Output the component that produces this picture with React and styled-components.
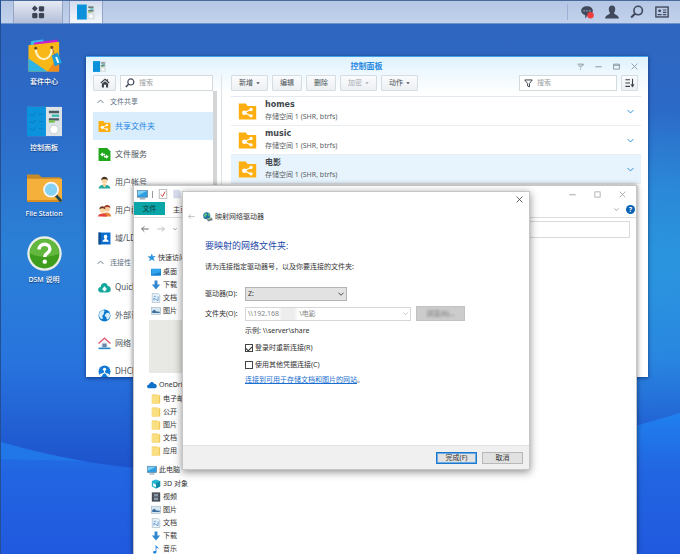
import React, { useState } from "react";
// STYLE
import styled, { createGlobalStyle } from "styled-components";

const sideGroups = [
  {
    title: "文件共享",
    items: [
      { name: "共享文件夹", icon: "share" },
      { name: "文件服务", icon: "service" },
      { name: "用户帐号", icon: "user" },
      { name: "用户群组", icon: "group" },
      { name: "域/LDAP", icon: "ldap" },
    ],
  },
  {
    title: "连接性",
    items: [
      { name: "QuickConnect", icon: "quick" },
      { name: "外部访问", icon: "globe" },
      { name: "网络", icon: "network" },
      { name: "DHCP Server", icon: "dhcp" },
    ],
  },
];

const folders = ["homes", "music", "电影"];

const tools = [
  { name: "新增", menu: true },
  { name: "编辑" },
  { name: "删除" },
  { name: "加密", menu: true, disabled: true },
  { name: "动作", menu: true },
];

const quickItems = [
  { name: "桌面", icon: "desktop" },
  { name: "下载", icon: "download" },
  { name: "文档", icon: "document" },
  { name: "图片", icon: "picture" },
];

const driveItems = ["电子邮件", "公开", "图片", "文档", "应用"];

const pcItems = [
  { name: "3D 对象", icon: "cube" },
  { name: "视频", icon: "video" },
  { name: "图片", icon: "picture" },
  { name: "文档", icon: "document" },
  { name: "下载", icon: "download" },
  { name: "音乐", icon: "music" },
];

// every drawing sits on a 24 x 24 grid
const drawings = {
  apps: (
    <g fill="#3c4354">
      <path d="M6.500 1l5 5-5 5-5-5z" />
      <rect x="13.500" y="2" width="9" height="9" rx="2" />
      <rect x="2" y="13.500" width="9" height="9" rx="2" />
      <rect x="13.500" y="13.500" width="9" height="9" rx="2" />
    </g>
  ),
  panel: (
    <g>
      <rect x="0" y="2" width="24" height="20" fill="#dce3e6" />
      <rect x="0" y="2" width="13" height="20" fill="#0a93dc" />
      <path d="M2 7l2 1 2-2M2 12l2 1 2-2M2 17l2 1 2-2M8 7h3M8 12h3M8 17h3" stroke="#0b7fc4" fill="none" strokeWidth=".7" />
      <path d="M15 5.500h7M15 10.500h7" stroke="#4a5a60" strokeWidth="1.600" />
      <path d="M17 8h5" stroke="#39b6b0" strokeWidth="1.600" />
      <path d="M15 12h4" stroke="#74c04a" strokeWidth="1.600" />
      <circle cx="18.500" cy="17.500" r="2.900" fill="#fff" stroke="#c4cdd0" strokeWidth=".6" />
    </g>
  ),
  package: (
    <g>
      <path d="M3 2l8-1 2 5H2z" fill="#39bdea" />
      <path d="M5 3l16-2v6H4z" fill="#c81fd0" />
      <path d="M1 5l9-1 12-1.500V23H1z" fill="#f8b818" />
      <path d="M1 14l13 9H1z" fill="#2fb4e6" />
      <path d="M22 12v11h-8z" fill="#f08c1c" />
      <path d="M6 7c0 10 11 10 11 0" fill="none" stroke="#fff3d0" strokeWidth="1.400" />
      <circle cx="6" cy="7" r="1" fill="#6b4a10" />
      <circle cx="17" cy="6.500" r="1" fill="#6b4a10" />
      <path d="M17 12l4-2 3 7-5 2.500z" fill="#1d9fdb" />
      <path d="M20 13l1.500 4" stroke="#fff" strokeWidth="1.300" />
      <path d="M17 6l2 6" stroke="#855" strokeWidth=".5" />
    </g>
  ),
  files: (
    <g>
      <path d="M0 3h8l2 2h13v4H0z" fill="#c88a28" />
      <path d="M0 6h24v16H0z" fill="#f5b03c" />
      <path d="M0 20.500h24V22H0z" fill="#d98e20" />
      <path d="M19.500 17l4 4.500" stroke="#23484e" strokeWidth="2" />
      <circle cx="16.500" cy="13.500" r="4.800" fill="#86d2f2" stroke="#f4f6f6" strokeWidth="1.200" />
    </g>
  ),
  help: (
    <g>
      <circle cx="12" cy="12" r="11.800" fill="#e9efe6" />
      <circle cx="12" cy="12" r="10.200" fill="#3f9d1d" />
      <path d="M2 12a10 10 0 0 1 20 0c-6 3-14 3-20 0z" fill="#62b83c" />
      <path d="M8.300 9.300c0-5 7.600-4.600 7.400-.2-.1 2.700-3.500 2.600-3.500 5.300" fill="none" stroke="#fff" strokeWidth="2.300" />
      <circle cx="12.200" cy="17.600" r="1.500" fill="#fff" />
    </g>
  ),
  chat: (
    <g>
      <path d="M12 2c6 0 10 3.500 10 8s-4 8-9 8l-4 5v-5.500c-4-1-7-4-7-7.500 0-4.500 4-8 10-8z" fill="#414a5c" />
      <path d="M6 10h2m3 0h2m3 0h2" stroke="#b9c8e0" strokeWidth="2" />
      <circle cx="18" cy="17.500" r="5.500" fill="#f03c3c" />
    </g>
  ),
  person: (
    <path d="M12 1c4 0 6 3 5.500 7-.3 3-1.500 4-2 5.500 0 3 7.500 2.500 8.500 9.500H0c1-7 8.500-6.500 8.500-9.500-.5-1.500-1.700-2.500-2-5.500C6 4 8 1 12 1z" fill="#414a5c" />
  ),
  search: (
    <g fill="none" stroke="#414a5c">
      <circle cx="14" cy="9.500" r="7.300" strokeWidth="2.800" />
      <path d="M8.500 15L2 21.500" strokeWidth="3.800" />
    </g>
  ),
  widget: (
    <g fill="none" stroke="#414a5c">
      <rect x="1.500" y="3.500" width="21" height="17" strokeWidth="2.400" />
      <circle cx="8" cy="10" r="1.300" strokeWidth="2.400" />
      <path d="M4.500 16.500h7M13.500 8.500h6M13.500 12.500h6M13.500 16.500h6" strokeWidth="2" />
    </g>
  ),
  home: (
    <g fill="#3c4249">
      <path d="M12 1L1 11l2 2 9-8 9 8 2-2-4-3.700V3h-3v2z" />
      <path d="M12 7.500l7.500 6.500v8.500h-5V16h-5v6.500h-5V14z" />
    </g>
  ),
  filter: <path d="M2 2.500h20L14.500 12v9l-5-2.500V12z" fill="none" stroke="#3c4249" strokeWidth="2.600" />,
  sort: (
    <g fill="none" stroke="#3c4249" strokeWidth="2.600">
      <path d="M1 4h11M1 12h11M1 20h11M18 2v18" />
      <path d="M14 15.500h8L18 22z" fill="#3c4249" strokeWidth="1" />
    </g>
  ),
  share: (
    <g>
      <path d="M1 2h9l2 3h11v17H1z" fill="#fdae10" />
      <path d="M8 13.500l8-4M8 13.500l8 4" stroke="#fff" strokeWidth="1.500" />
      <circle cx="8" cy="13.500" r="2.900" fill="#fff" />
      <circle cx="16.500" cy="9.500" r="2.100" fill="#fff" />
      <circle cx="16.500" cy="17.500" r="2.100" fill="#fff" />
    </g>
  ),
  service: (
    <g>
      <path d="M1 0h16l6 6v18H1z" fill="#20a81c" />
      <path d="M4 12l5-4v2.500h4v3H9V16zM20 16l-5-4v2.500h-4v3h4V20z" fill="#fff" />
    </g>
  ),
  user: (
    <g>
      <path d="M1 23c1-6 6-7 11-7s10 1 11 7z" fill="#26aaa0" />
      <path d="M9 14h6v4l-3 3-3-3z" fill="#f7cf9a" />
      <circle cx="12" cy="8.500" r="5.500" fill="#fbd7a4" />
      <path d="M6 8c-1-9 13-9 12 0-2-2.500-10-2.500-12 0z" fill="#4a3426" />
    </g>
  ),
  group: (
    <g>
      <path d="M8 20c1-6 15-6 16 1v2H8z" fill="#e58a3c" />
      <circle cx="17" cy="9" r="5" fill="#f8cb9c" />
      <path d="M11 8c0-8 12-8 12 0-3-3-8-3-12 0z" fill="#a33c20" />
      <path d="M0 23c1-7 16-7 17 0z" fill="#e2413c" />
      <circle cx="8" cy="11" r="5" fill="#fbd7a4" />
      <path d="M2.500 10C2 2 14 2 13.500 10c-3-3-8-3-11 0z" fill="#6e3420" />
    </g>
  ),
  ldap: (
    <g>
      <rect x="1" y="1" width="22" height="22" fill="#0a6ed0" />
      <rect x="1" y="1" width="4" height="22" fill="#134a86" />
      <path d="M14 5c4 0 4 5 1.500 7.500 0 1.500 4 1.500 4.500 5.500H8c.5-4 4.500-4 4.500-5.500C10 10 10 5 14 5z" fill="#fff" />
    </g>
  ),
  quick: (
    <g>
      <path d="M6 21C-2 21-1 11 5 11 5 2 17 1 18 9c7 0 8 12 0 12z" fill="#13a89b" />
      <path d="M12 9.500l5 6h-3V19h-4v-3.500H7z" fill="#fff" />
    </g>
  ),
  globe: (
    <g>
      <circle cx="12" cy="12" r="11" fill="#0b78cf" />
      <path d="M4 5c4-4 8-3 8-1s-2 2-1 4-3 3-3 5 2 3 0 6c-4-1-6-5-6.500-8zM14 9c2-3 6-3 8 0 1 4-1 9-5 11-2-3-1-5-3-6s-2-3 0-5z" fill="#d8eefb" />
    </g>
  ),
  network: (
    <g>
      <path d="M5 10v9h14v-9l-7-6z" fill="#eef3f6" />
      <path d="M1 12L12 2l11 10" fill="none" stroke="#e0566c" strokeWidth="2.600" />
      <path d="M8 19v-7h8v7z" fill="#6c88a8" />
      <path d="M1 21h22" stroke="#2b86c9" strokeWidth="3" />
    </g>
  ),
  dhcp: (
    <g>
      <circle cx="12" cy="12" r="11" fill="#1279d4" />
      <circle cx="12" cy="8" r="3" fill="#fff" />
      <path d="M12 10v5M12 14l-6 4M12 14l6 4" stroke="#fff" strokeWidth="2" />
      <circle cx="6" cy="18" r="2.500" fill="#fff" />
      <circle cx="18" cy="18" r="2.500" fill="#fff" />
    </g>
  ),
  star: <path d="M13 1l2.600 7.600 7.900-.4-6.200 5.300 3.200 8.500-7.500-4.500L5.500 22l2.200-8L1 9.500l8.500-.6z" fill="#2d96e0" />,
  desktop: (
    <g>
      <rect x="0" y="4" width="24" height="17" rx="1" fill="#1a82d2" />
      <path d="M1 5h22v7L1 18z" fill="#32a4ec" />
    </g>
  ),
  download: <path d="M8.500 1h7v10H22L12 22.500 2 11h6.500z" fill="#3287cd" />,
  document: (
    <g>
      <path d="M3 1h14l4 4v18H3z" fill="#eaf2f9" stroke="#8ba0b3" strokeWidth="1.200" />
      <path d="M7 8h5M7 12l10 7M17 8v10M7 18v-6" stroke="#3d86c6" strokeWidth="1.800" fill="none" />
    </g>
  ),
  picture: (
    <g>
      <rect x="1" y="4" width="22" height="16" fill="#d6e6f2" stroke="#8da3b4" strokeWidth="1.200" />
      <path d="M3 17v-5l5-3 5 4 8 1v3z" fill="#3b6f9e" />
    </g>
  ),
  cloud: <path d="M6 20C-2 20-1 11 5 11 7 3 15 3 17 9c7-1 9 10 2 11z" fill="#0f6fc9" />,
  folder: (
    <g>
      <path d="M2 1h14v2h6v20H2z" fill="#efc856" />
      <path d="M2 3h17v20H2z" fill="#fadf82" />
    </g>
  ),
  pc: (
    <g>
      <rect x="1" y="3" width="22" height="15" fill="#2f9fe4" stroke="#5c7890" strokeWidth="1.400" />
      <path d="M2 4h20L2 14z" fill="#7fd0f7" />
      <path d="M6 21.500h12" stroke="#73899b" strokeWidth="2.200" />
    </g>
  ),
  cube: (
    <g>
      <path d="M12 1l10 4v13l-10 5-10-5V5z" fill="#27b5cf" />
      <path d="M12 10l10-5v13l-10 5z" fill="#0f8aa8" />
      <path d="M5 10l7 3v7l-7-3z" fill="#e9fbff" />
    </g>
  ),
  video: (
    <g>
      <rect x="2" y="1" width="20" height="22" fill="#3a4048" />
      <path d="M7 4h10v7H7zM7 13h10v7H7z" fill="#8a99a8" />
      <path d="M5 2v20M19 2v20" stroke="#cbd3da" strokeWidth="1" strokeDasharray="2 2" />
    </g>
  ),
  music: <path d="M11 1c1 5 8 5 7 12-1-4-4-4-5-4v10c0 5-8 5-8 1 0-3 3-4 6-3z" fill="#1f83d8" />,
  check: (
    <g>
      <path d="M3 1h18v22H3z" fill="#fff" stroke="#999" strokeWidth="1.600" />
      <path d="M7 13l4 5 6-12" fill="none" stroke="#d44" strokeWidth="2.400" />
    </g>
  ),
  blank: <path d="M3 2h14l4 4v16H3z" fill="#d8ddee" />,
  drive: (
    <g>
      <circle cx="9" cy="9" r="8.500" fill="#1d6fa8" />
      <path d="M3 5c4-4 7-2 7 1s-4 3-3 7c-4 0-6-5-4-8zM12 3c4 0 5 4 4 8-3 0-5-4-4-8z" fill="#5bbd7a" />
      <path d="M8 15l12-2 4 6-12 4z" fill="#707d85" />
      <path d="M11 17l8-2" stroke="#8df08d" strokeWidth="2" />
    </g>
  ),
  left: <path d="M23 12H2m8-8l-8 8 8 8" fill="none" stroke="currentColor" strokeWidth="2.600" />,
  right: <path d="M1 12h21m-8-8l8 8-8 8" fill="none" stroke="currentColor" strokeWidth="2.600" />,
  up: <path d="M2 17L12 7l10 10" fill="none" stroke="currentColor" strokeWidth="3" />,
  down: <path d="M2 7l10 10L22 7" fill="none" stroke="currentColor" strokeWidth="3.400" />,
  caret: <path d="M2 7h20L12 19z" fill="currentColor" />,
  close: <path d="M2 2l20 20M22 2L2 22" stroke="currentColor" strokeWidth="2.600" />,
  mini: <path d="M1 13h22" stroke="currentColor" strokeWidth="3" />,
  box: <rect x="3" y="3" width="18" height="18" fill="none" stroke="currentColor" strokeWidth="2.400" />,
  maxi: <path d="M2 4h20v17H2zM2 8h20" fill="none" stroke="currentColor" strokeWidth="2.800" />,
  ask: <path d="M2 4h20c0 8-10 4-10 12m0 3v4M5 10h7" fill="none" stroke="currentColor" strokeWidth="2.800" />,
};

function Icon({ name, size = 12 }) {
  return (
    <Drawing viewBox="0 0 24 24" width={size} height={size} aria-hidden="true">
      {drawings[name]}
    </Drawing>
  );
}

function ControlPanel() {
  const [page, setPage] = useState("共享文件夹");
  const [folder, setFolder] = useState("电影");

  return (
    <PanelWindow>
      <PanelTitle>
        <Icon name="panel" size={13} />
        <h1>控制面板</h1>
        <PanelControls>
          {["ask", "mini", "maxi", "close"].map((name) => (
            <IconButton key={name} aria-label={name}>
              <Icon name={name} size={7} />
            </IconButton>
          ))}
        </PanelControls>
      </PanelTitle>
      <PanelBody>
        <SideBar>
          <SideTop>
            <ToolButton $wide aria-label="首页">
              <Icon name="home" size={10} />
            </ToolButton>
            <SearchBox>
              <Icon name="search" size={10} />
              <input placeholder="搜索" aria-label="搜索" />
            </SearchBox>
          </SideTop>
          {sideGroups.map((group) => (
            <div key={group.title}>
              <SideHeader>
                <Icon name="up" size={7} />
                {group.title}
              </SideHeader>
              {group.items.map((item) => (
                <SideItem
                  key={item.name}
                  href="#"
                  $active={page === item.name}
                  onClick={() => setPage(item.name)}
                >
                  <Icon name={item.icon} size={13} />
                  {item.name}
                </SideItem>
              ))}
            </div>
          ))}
        </SideBar>
        <ScrollTrack />
        <PanelMain>
          <ToolBar>
            {tools.map((tool) => (
              <ToolButton key={tool.name} disabled={tool.disabled}>
                {tool.name}
                {tool.menu && <Icon name="caret" size={4} />}
              </ToolButton>
            ))}
            <Spacer />
            <SearchBox $width="98px">
              <Icon name="filter" size={9} />
              <input placeholder="搜索" aria-label="筛选" />
            </SearchBox>
            <ToolButton $narrow aria-label="排序">
              <Icon name="sort" size={10} />
            </ToolButton>
          </ToolBar>
          {folders.map((name) => (
            <FolderRow
              key={name}
              $active={folder === name}
              onClick={() => setFolder(name)}
            >
              <Icon name="share" size={19} />
              <FolderText>
                <strong>{name}</strong>
                <span>存储空间 1 (SHR, btrfs)</span>
              </FolderText>
              <Icon name="down" size={7} />
            </FolderRow>
          ))}
        </PanelMain>
      </PanelBody>
    </PanelWindow>
  );
}

function Explorer() {
  return (
    <ExplorerWindow>
      <ExplorerTitle>
        <Icon name="pc" size={11} />
        <Divider />
        <Icon name="check" size={10} />
        <Icon name="blank" size={10} />
        <Spacer />
        <ExplorerControls>
          {["mini", "box", "close"].map((name) => (
            <IconButton key={name} aria-label={name}>
              <Icon name={name} size={7} />
            </IconButton>
          ))}
        </ExplorerControls>
      </ExplorerTitle>
      <Ribbon>
        <FileTab>文件</FileTab>
        <Tab>主页</Tab>
        <Spacer />
        <Icon name="down" size={5} />
        <HelpButton>?</HelpButton>
      </Ribbon>
      <AddressRow>
        <Icon name="left" size={8} />
        <Muted>
          <Icon name="right" size={8} />
        </Muted>
        <Icon name="down" size={4} />
        <input aria-label="地址" />
      </AddressRow>
      <Tree>
        <TreeHead href="#">
          <Icon name="star" size={9} />
          快速访问
        </TreeHead>
        {quickItems.map((item) => (
          <TreeItem key={item.name} href="#">
            <Icon name={item.icon} size={10} />
            {item.name}
          </TreeItem>
        ))}
        <Covered />
        <TreeHead href="#">
          <Icon name="cloud" size={10} />
          OneDrive
        </TreeHead>
        {driveItems.map((name) => (
          <TreeItem key={name} href="#">
            <Icon name="folder" size={10} />
            {name}
          </TreeItem>
        ))}
        <TreeGap />
        <TreeHead href="#">
          <Icon name="pc" size={10} />
          此电脑
        </TreeHead>
        {pcItems.map((item) => (
          <TreeItem key={item.name} href="#">
            <Icon name={item.icon} size={10} />
            {item.name}
          </TreeItem>
        ))}
      </Tree>
    </ExplorerWindow>
  );
}

function MapDrive() {
  const [drive, setDrive] = useState("Z:");
  const [path, setPath] = useState("\\\\192.168\u00a0\u00a0\u00a0\u00a0\u00a0\u00a0\u00a0\u00a0\u00a0\u00a0\u00a0\\电影");
  const [again, setAgain] = useState(true);
  const [other, setOther] = useState(false);

  return (
    <Dialog role="dialog" aria-labelledby="map-title">
      <DialogTop>
        <IconButton aria-label="关闭">
          <Icon name="close" size={7} />
        </IconButton>
      </DialogTop>
      <DialogTitle>
        <Muted>
          <Icon name="left" size={7} />
        </Muted>
        <Icon name="drive" size={10} />
        <span id="map-title">映射网络驱动器</span>
      </DialogTitle>
      <DialogBody>
        <h2>要映射的网络文件夹:</h2>
        <p>请为连接指定驱动器号，以及你要连接的文件夹:</p>
        <Field>
          <label htmlFor="drive">驱动器(D):</label>
          <SelectBox>
            <select
              id="drive"
              value={drive}
              onChange={(e) => setDrive(e.target.value)}
            >
              <option>Z:</option>
              <option>Y:</option>
            </select>
            <Icon name="down" size={6} />
          </SelectBox>
        </Field>
        <Field>
          <label htmlFor="path">文件夹(O):</label>
          <PathBox>
            <input
              id="path"
              value={path}
              onChange={(e) => setPath(e.target.value)}
            />
            <Icon name="down" size={5} />
          </PathBox>
          <BrowseButton disabled>
            <span>浏览(B)...</span>
          </BrowseButton>
        </Field>
        <Options>
          <Example>示例: \\server\share</Example>
          <CheckLabel>
            <input
              type="checkbox"
              checked={again}
              onChange={() => setAgain(!again)}
            />
            登录时重新连接(R)
          </CheckLabel>
          <CheckLabel>
            <input
              type="checkbox"
              checked={other}
              onChange={() => setOther(!other)}
            />
            使用其他凭据连接(C)
          </CheckLabel>
          <Note>
            <a href="#">连接到可用于存储文档和图片的网站</a>。
          </Note>
        </Options>
      </DialogBody>
      <DialogFooter>
        <DialogButton $primary>完成(F)</DialogButton>
        <DialogButton>取消</DialogButton>
      </DialogFooter>
    </Dialog>
  );
}

function App() {
  return (
    <Desktop>
      <GlobalStyle />
      <Wallpaper viewBox="0 0 680 554" preserveAspectRatio="none" aria-hidden="true">
        <defs>
          <linearGradient id="sky" x1="0" y1="0" x2="0" y2="1">
            <stop offset="0" stopColor="#2f64bc" />
            <stop offset="0.2" stopColor="#2c6ac8" />
            <stop offset="0.45" stopColor="#2b80d6" />
            <stop offset="0.65" stopColor="#2874de" />
            <stop offset="0.85" stopColor="#1d52cc" />
          </linearGradient>
          <radialGradient id="glow">
            <stop offset="0" stopColor="#2aa4e4" stopOpacity="0.6" />
            <stop offset="0.5" stopColor="#2aa4e4" stopOpacity="0.4" />
            <stop offset="1" stopColor="#2aa4e4" stopOpacity="0" />
          </radialGradient>
          <linearGradient id="hill" x1="0" y1="0" x2="0" y2="1">
            <stop offset="0" stopColor="#2080ee" />
            <stop offset="0.4" stopColor="#2266e2" />
            <stop offset="1" stopColor="#2059de" />
          </linearGradient>
        </defs>
        <rect width="680" height="554" fill="url(#sky)" />
        <ellipse cx="640" cy="270" rx="300" ry="160" fill="url(#glow)" />
        <path d="M0 442Q70 462 134 468Q420 494 680 413V554H0z" fill="url(#hill)" />
        <path d="M0 442Q40 454 82 461L0 459z" fill="#2277e8" />
      </Wallpaper>
      <TaskBar>
        <TaskButton $width="50px" aria-label="主菜单">
          <Icon name="apps" size={14} />
        </TaskButton>
        <TaskButton $width="34px" $active aria-label="控制面板">
          <Icon name="panel" size={18} />
        </TaskButton>
        <Spacer />
        <Tray>
          {["chat", "person", "search", "widget"].map((name) => (
            <IconButton key={name} aria-label={name}>
              <Icon name={name} size={14} />
            </IconButton>
          ))}
        </Tray>
      </TaskBar>
      <Shortcuts>
        <Shortcut href="#">
          <Icon name="package" size={35} />
          套件中心
        </Shortcut>
        <Shortcut href="#">
          <Icon name="panel" size={35} />
          控制面板
        </Shortcut>
        <Shortcut href="#">
          <Icon name="files" size={35} />
          File Station
        </Shortcut>
        <Shortcut href="#">
          <Icon name="help" size={35} />
          DSM 说明
        </Shortcut>
      </Shortcuts>
      <ControlPanel />
      <Explorer />
      <MapDrive />
    </Desktop>
  );
}

const GlobalStyle = createGlobalStyle`
  * {
    box-sizing: border-box;
  }
  body {
    margin: 0;
  }
  body, button, input, select {
    font-family: "Noto Sans", "Noto Sans CJK SC", sans-serif;
    font-size: 7px;
    line-height: 12px;
    color: #333;
  }
  button {
    padding: 0;
    border: 0;
    background: none;
  }
  input {
    min-width: 0;
    padding: 0;
    border: 0;
    outline: 0;
    background: none;
  }
  a {
    color: inherit;
    text-decoration: none;
  }
  h1, h2, p {
    margin: 0;
  }
`;

const Drawing = styled.svg`
  display: block;
  flex: none;
`;
const Spacer = styled.div`
  flex: 1;
`;
const IconButton = styled.button`
  display: flex;
  color: inherit;
`;

const Desktop = styled.div`
  position: relative;
  height: 100vh;
  overflow: hidden;
  background: #2a6fd0;
  border-left: 1px solid #244f94;
`;
const Wallpaper = styled.svg`
  position: absolute;
  inset: 0;
  width: 100%;
  height: 100%;
`;

const TaskBar = styled.div`
  position: relative;
  height: 24px;
  display: flex;
  gap: 6px;
  padding-left: 12px;
  background: linear-gradient(#b4c7e4, #c3d2ec);
  border-top: 1px solid #4a6a9c;
  border-bottom: 1px solid #6f94cc;
`;
const TaskButton = styled.button`
  width: ${(props) => props.$width};
  display: flex;
  align-items: center;
  justify-content: center;
  background: ${(props) =>
    props.$active
      ? "linear-gradient(#d3dcee, #f4f7fc)"
      : "linear-gradient(#e6eaf4, #b3bed8)"};
  border: solid #94a4c4;
  border-width: 0 1px;
`;
const Tray = styled.div`
  display: flex;
  align-items: center;
  gap: 11px;
  margin: 3px 0;
  padding: 0 11px 0 12px;
  border-left: 1px solid #9db1d4;
`;

const Shortcuts = styled.div`
  position: relative;
  width: 86px;
  padding-top: 14px;
  display: flex;
  flex-direction: column;
`;
const Shortcut = styled.a`
  height: 66px;
  display: flex;
  flex-direction: column;
  align-items: center;
  gap: 3px;
  color: white;
  font-weight: 500;
  text-shadow: 0 1px 1px #123a78;
`;

const PanelWindow = styled.section`
  position: absolute;
  top: 56px;
  left: 85px;
  right: 32px;
  height: 321px;
  overflow: hidden;
  display: flex;
  flex-direction: column;
  background: linear-gradient(#e0f2fd, white 36px);
  border-top: 1px solid #3fa0ec;
  box-shadow: 0 1px 4px rgba(0, 20, 70, 0.6);
`;
const PanelTitle = styled.header`
  height: 18px;
  display: flex;
  align-items: center;
  justify-content: space-between;
  padding: 0 10px 0 7px;
  h1 {
    padding-left: 50px;
    font-size: 8px;
    color: #2789e0;
  }
`;
const PanelControls = styled.div`
  display: flex;
  gap: 11px;
  color: #7d8890;
`;
const PanelBody = styled.div`
  flex: 1;
  min-height: 0;
  display: flex;
  padding: 0 7px;
`;
const SideBar = styled.nav`
  width: 120px;
  flex: none;
`;
const SideTop = styled.div`
  height: 16px;
  display: flex;
  gap: 4px;
`;
const ToolButton = styled.button`
  height: 16px;
  width: ${(props) => (props.$wide ? "23px" : props.$narrow ? "17px" : "auto")};
  padding: ${(props) => (props.$wide || props.$narrow ? "0" : "0 7px")};
  display: flex;
  align-items: center;
  justify-content: center;
  gap: 3px;
  color: #454d54;
  background: linear-gradient(#fafbfc, #edf0f4);
  border: 1px solid #d5dce2;
  border-radius: 1px;
  &:disabled {
    color: #a4aaae;
  }
`;
const SearchBox = styled.label`
  height: 16px;
  flex: ${(props) => (props.$width ? "none" : "1")};
  width: ${(props) => props.$width || "auto"};
  min-width: 0;
  display: flex;
  align-items: center;
  gap: 4px;
  padding: 0 4px;
  background: white;
  border: 1px solid #d3dade;
  input {
    flex: 1;
  }
  input::placeholder {
    color: #9a9fa3;
  }
`;
const SideHeader = styled.div`
  height: 21px;
  display: flex;
  align-items: center;
  gap: 6px;
  padding-left: 4px;
  color: #5d6f82;
`;
const SideItem = styled.a`
  height: 28px;
  display: flex;
  align-items: center;
  gap: 4px;
  padding-left: 5px;
  font-size: 8px;
  white-space: nowrap;
  color: ${(props) => (props.$active ? "#1f87e4" : "#4a5056")};
  background: ${(props) => (props.$active ? "#d9edfc" : "none")};
`;
const ScrollTrack = styled.div`
  width: 4px;
  flex: none;
  margin: 16px 4px 0 0;
  background: #d3d5d7;
`;
const PanelMain = styled.div`
  flex: 1;
  min-width: 0;
  padding-left: 9px;
  border-left: 1px solid #dfe4e8;
`;
const ToolBar = styled.div`
  height: 22px;
  display: flex;
  gap: 4px;
  padding-right: 3px;
  border-bottom: 1px solid #e3e9ee;
`;
const FolderRow = styled.div`
  height: 29px;
  display: flex;
  align-items: center;
  padding: 0 7px;
  color: #2a90d8;
  background: ${(props) => (props.$active ? "#e7f4fd" : "white")};
  border-bottom: 1px solid #e9eef2;
`;
const FolderText = styled.div`
  flex: 1;
  display: flex;
  flex-direction: column;
  padding-left: 8px;
  color: #5a5f64;
  strong {
    font-family: "DejaVu Sans", "Noto Sans CJK SC", sans-serif;
    font-size: 8px;
    color: #43484d;
  }
`;

const ExplorerWindow = styled.section`
  position: absolute;
  top: 185px;
  left: 132px;
  right: 43px;
  bottom: 0;
  overflow: hidden;
  display: flex;
  flex-direction: column;
  background: white;
  border: 1px solid #c4c6c8;
  border-bottom: 0;
  box-shadow: 0 0 5px rgba(0, 0, 0, 0.5);
`;
const ExplorerTitle = styled.header`
  height: 16px;
  flex: none;
  display: flex;
  align-items: center;
  gap: 4px;
  padding: 0 10px 0 3px;
`;
const Divider = styled.div`
  width: 1px;
  height: 7px;
  margin-right: 1px;
  background: #999;
`;
const ExplorerControls = styled.div`
  display: flex;
  gap: 18px;
  color: #999;
`;
const Ribbon = styled.div`
  height: 16px;
  flex: none;
  display: flex;
  align-items: center;
  padding-right: 1px;
  color: #888;
  border-bottom: 1px solid #dcdcdc;
`;
const FileTab = styled.button`
  width: 31px;
  height: 13px;
  align-self: flex-start;
  color: #143c40;
  background: #0aa5a6;
`;
const Tab = styled.button`
  padding-left: 8px;
`;
const HelpButton = styled.button`
  width: 9px;
  height: 9px;
  margin-left: 7px;
  line-height: 9px;
  font-weight: bold;
  color: white;
  background: #0a62b4;
  border-radius: 50%;
`;
const AddressRow = styled.div`
  height: 22px;
  flex: none;
  display: flex;
  align-items: center;
  gap: 8px;
  padding: 0 6px 0 7px;
  color: #555;
  input {
    flex: 1;
    height: 17px;
    border: 1px solid #dadada;
  }
`;
const Muted = styled.span`
  color: #b4b4b4;
`;
const Tree = styled.nav`
  padding-top: 10px;
  width: 120px;
  white-space: nowrap;
`;
const TreeHead = styled.a`
  height: 15px;
  display: flex;
  align-items: center;
  gap: 2px;
  padding-left: 13px;
`;
const TreeItem = styled.a`
  height: 13px;
  display: flex;
  align-items: center;
  gap: 2px;
  padding-left: 17px;
`;
const TreeGap = styled.div`
  height: 5px;
`;
// block of hidden folder names
const Covered = styled.div`
  height: 53px;
  margin: 3px 0 4px 15px;
  background: linear-gradient(90deg, #e9eae6, #e0e0d7);
`;

const Dialog = styled.section`
  position: absolute;
  top: 191px;
  left: 181px;
  width: 348px;
  display: flex;
  flex-direction: column;
  background: white;
  border: 1px solid #c6c6c6;
  box-shadow: 0 2px 8px rgba(0, 0, 0, 0.45);
`;
const DialogTop = styled.div`
  height: 15px;
  display: flex;
  align-items: center;
  justify-content: flex-end;
  padding-right: 6px;
`;
const DialogTitle = styled.div`
  height: 19px;
  display: flex;
  align-items: center;
  gap: 2px;
  padding-left: 5px;
  ${Muted} {
    margin-right: 6px;
  }
`;
const DialogBody = styled.div`
  display: flex;
  flex-direction: column;
  padding: 12px 22px 0;
  h2 {
    font-size: 9px;
    line-height: 16px;
    font-weight: 400;
    color: #2347a8;
  }
  p {
    padding: 7px 0 8px;
  }
`;
const Field = styled.div`
  display: flex;
  align-items: center;
  height: 15px;
  margin-top: 5px;
  label {
    width: 40px;
  }
`;
const SelectBox = styled.div`
  position: relative;
  width: 102px;
  select {
    display: block;
    width: 100%;
    height: 14px;
    padding: 0 2px;
    appearance: none;
    background: #e2e2e2;
    border: 1px solid #b4b4b4;
    border-radius: 0;
  }
  svg {
    position: absolute;
    top: 4px;
    right: 3px;
    pointer-events: none;
  }
`;
const PathBox = styled.div`
  width: 166px;
  height: 14px;
  display: flex;
  align-items: center;
  padding: 0 2px;
  color: #b0b0b0;
  background: linear-gradient(90deg, transparent 32px, #ededed 36px, #ededed 48px, transparent 53px);
  border: 1px solid #d6d6d6;
  input {
    flex: 1;
    color: #858585;
  }
`;
const BrowseButton = styled.button`
  width: 49px;
  height: 15px;
  margin-left: 5px;
  color: #777;
  background: #cccccc;
  border: 1px solid #c2c2c2;
  span {
    filter: blur(1px);
  }
`;
const Options = styled.div`
  padding: 2px 0 58px 40px;
`;
const Example = styled.div`
  height: 16px;
  line-height: 16px;
`;
const CheckLabel = styled.label`
  height: 17px;
  display: flex;
  align-items: center;
  gap: 2px;
  input {
    width: 8px;
    height: 8px;
    margin: 0;
    appearance: none;
    background: white;
    border: 1px solid #444;
  }
  input:checked::before {
    content: "";
    display: block;
    width: 3px;
    height: 5px;
    margin: 0 auto;
    border: solid #333;
    border-width: 0 1px 1px 0;
    transform: rotate(45deg);
  }
`;
const Note = styled.div`
  line-height: 14px;
  a {
    color: #1a6fd0;
    text-decoration: underline;
  }
`;
const DialogFooter = styled.footer`
  height: 24px;
  display: flex;
  align-items: center;
  justify-content: flex-end;
  gap: 5px;
  padding-right: 6px;
  background: #f0f0f0;
  border-top: 1px solid #e2e2e2;
`;
const DialogButton = styled.button`
  width: 41px;
  height: 12px;
  line-height: 8px;
  background: #e1e1e1;
  border: 1px solid #b8b8b8;
  ${(props) => props.$primary && "border-color: #1c78cc; box-shadow: inset 0 0 0 1px #6aaae4;"}
`;

export default App;
